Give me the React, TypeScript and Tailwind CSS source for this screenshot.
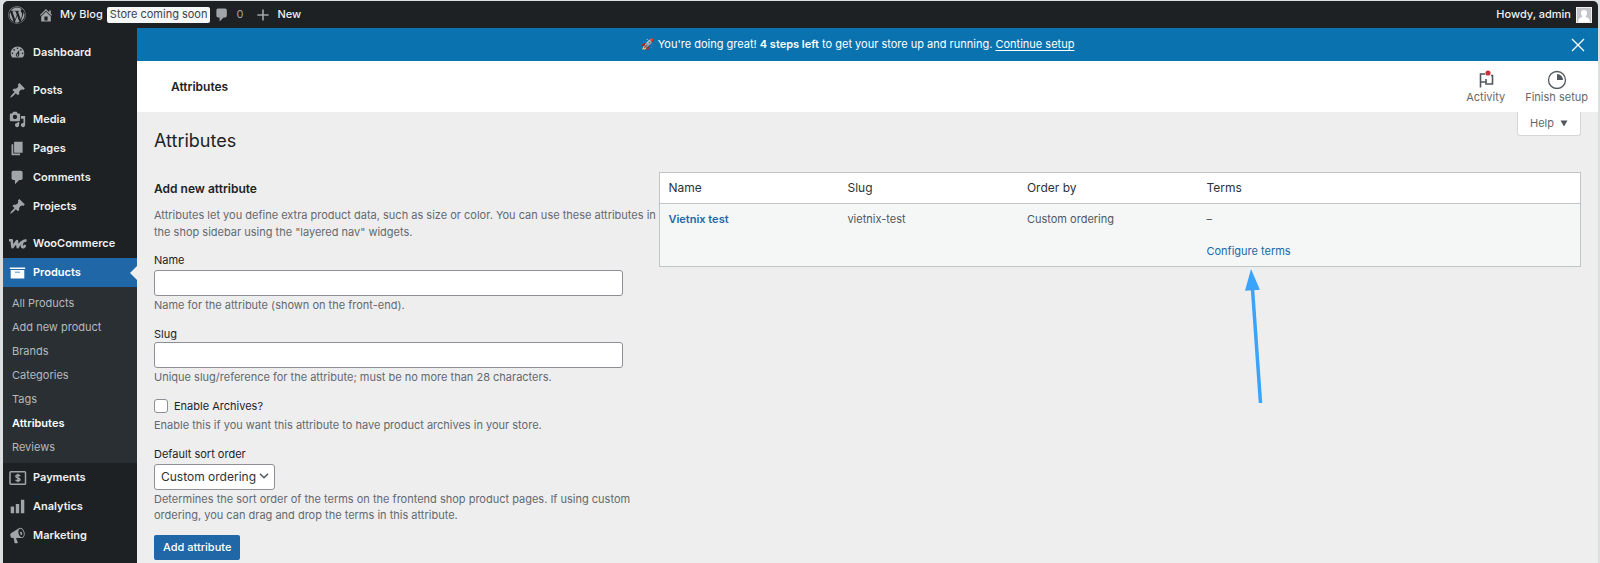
import React from 'react';
import { FaWordpress } from 'react-icons/fa';

const ICONS = {
  home: 'M16 8.5l1.53 1.53-1.06 1.06L10 4.6l-6.47 6.49-1.06-1.06L10 2.5l4 4v-2h2v4zm-6-2.46l6 5.99V18H4v-5.97zM12 17v-5H8v5h4z',
  dashboard:
    'M3.76 16h12.48c1.1-1.37 1.76-3.11 1.76-5 0-4.42-3.58-8-8-8s-8 3.58-8 8c0 1.89.66 3.63 1.76 5zM10 4c.55 0 1 .45 1 1s-.45 1-1 1-1-.45-1-1 .45-1 1-1zM6 6c.55 0 1 .45 1 1s-.45 1-1 1-1-.45-1-1 .45-1 1-1zm8 0c.55 0 1 .45 1 1s-.45 1-1 1-1-.45-1-1 .45-1 1-1zm-5.37 5.55L12 7v6c0 1.1-.9 2-2 2s-2-.9-2-2c0-.57.24-1.08.63-1.45zM4 10c.55 0 1 .45 1 1s-.45 1-1 1-1-.45-1-1 .45-1 1-1zm12 0c.55 0 1 .45 1 1s-.45 1-1 1-1-.45-1-1 .45-1 1-1zm-5 3c0-.55-.45-1-1-1s-1 .45-1 1 .45 1 1 1 1-.45 1-1z',
  pin: 'M10.44 3.02l1.82-1.82 6.36 6.35-1.83 1.82c-1.05-.68-2.48-.57-3.41.36l-.75.75c-.92.93-1.04 2.35-.35 3.41l-1.83 1.82-2.41-2.41-2.8 2.79c-.42.42-3.38 2.71-3.8 2.29s1.86-3.39 2.28-3.81l2.79-2.79L4.1 9.36l1.83-1.82c1.05.69 2.48.57 3.4-.36l.75-.75c.93-.92 1.05-2.35.36-3.41z',
  media:
    'M13 11V4c0-.55-.45-1-1-1h-1.67L9 1H5L3.67 3H2c-.55 0-1 .45-1 1v7c0 .55.45 1 1 1h10c.55 0 1-.45 1-1zM7 4.5c1.38 0 2.5 1.12 2.5 2.5S8.38 9.5 7 9.5 4.5 8.38 4.5 7 5.62 4.5 7 4.5zM14 6h5v10.5c0 1.38-1.12 2.5-2.5 2.5S14 17.88 14 16.5s1.12-2.5 2.5-2.5c.17 0 .34.02.5.05V9h-3V6zm-4 8.05V13h2v3.5c0 1.38-1.12 2.5-2.5 2.5S7 17.88 7 16.5 8.12 14 9.5 14c.17 0 .34.02.5.05z',
  page: 'M6 15V2h10v13H6zm-1 1h8v2H3V5h2v11z',
  comment: 'M5 2h9c1.1 0 2 .9 2 2v7c0 1.1-.9 2-2 2h-2l-5 5v-5H5c-1.1 0-2-.9-2-2V4c0-1.1.9-2 2-2z',
  archive: 'M19 4v2H1V4h18zM2 7h16v10H2V7zm11 3V9H7v1h6z',
  chart: 'M18 18V2h-4v16h4zm-6 0V7H8v11h4zm-6 0v-8H2v8h4z',
  megaphone:
    'M18.15 5.94c.46 1.62.38 3.22-.02 4.48-.42 1.28-1.26 2.18-2.3 2.48-.16.06-.26.06-.4.06-.06.02-.12.02-.18.02-.06.02-.14.02-.22.02h-6.8l2.22 5.5c.02.14-.06.26-.14.34-.08.1-.24.16-.34.16H6.95c-.1 0-.26-.06-.34-.16-.08-.08-.16-.2-.14-.34l-1-5.5H4.25l-.02-.02c-.5.06-1.08-.18-1.54-.62s-.88-1.08-1.06-1.88c-.24-.8-.2-1.56-.02-2.2.18-.62.58-1.08 1.06-1.3l.02-.02 9-5.4c.1-.06.18-.1.24-.16.06-.04.14-.08.24-.12.16-.08.28-.12.5-.18 1.04-.3 2.24.1 3.22.98s1.84 2.24 2.26 3.86zm-2.58 5.98h-.02c.4-.1.74-.34 1.04-.7.58-.7.86-1.76.86-3.04 0-.64-.1-1.3-.28-1.98-.34-1.36-1.02-2.5-1.78-3.24s-1.68-1.1-2.46-.88c-.82.22-1.4.96-1.7 2-.32 1.04-.28 2.36.06 3.72.38 1.36 1 2.5 1.8 3.24.78.74 1.62 1.1 2.48.88zM13 6.1c.5-.7 1.5-.6 2 .2.6.9.7 2.3.1 2.9-.5.5-1.2.3-1.6-.3z',
  plus: 'M17 9v2h-6v6H9v-6H3V9h6V3h2v6h6z',
};

type IconName = keyof typeof ICONS;

const Icon: React.FC<{ name: IconName; className?: string }> = ({ name, className = 'size-[17px]' }) => (
  <svg viewBox="0 0 20 20" fill="currentColor" fillRule="evenodd" className={className} aria-hidden="true">
    <path d={ICONS[name]} />
  </svg>
);

const PaymentsIcon = () => (
  <svg viewBox="0 0 18 16" fill="none" stroke="currentColor" className="h-4 w-[18px] shrink-0" aria-hidden="true">
    <rect x="1" y="1.8" width="15.5" height="12.4" rx="0.8" strokeWidth="1.5" />
    <path d="M11.1 6.2C10.8 5.4 10 5.1 8.9 5.1c-1.2 0-2 .5-2 1.4 0 2 4.1.9 4.1 3 0 .9-.9 1.4-2.1 1.4-1.1 0-1.9-.4-2.2-1.2M8.9 3.8v8.4" strokeWidth="1.5" />
  </svg>
);

const WooIcon = () => (
  <svg viewBox="0 0 18 12" fill="none" stroke="currentColor" strokeLinejoin="round" className="h-3 w-[18px] shrink-0" aria-hidden="true">
    <path d="M0 2.3h2.8c0 2.500.2 5 .7 7L8 3c0 2.300.2 4.300.7 6.300C10.500 5.800 12.500 3 17.500 2.300" strokeWidth="2.500" />
    <path d="M13.500 4c-1.300 3.200-.9 5.300.4 5.300 1 0 1.800-.8 2.300-2.300" strokeWidth="2.400" />
  </svg>
);

type MenuIcon = IconName | 'payments' | 'woo';

const MenuItem: React.FC<{ label: string; icon: MenuIcon; active?: boolean }> = ({ label, icon, active }) => (
  <li>
    <a
      href="#"
      className={
        active
          ? 'relative flex h-[29px] items-center gap-[7px] bg-[#2067a7] pl-[6px] text-white'
          : 'flex h-[29px] items-center gap-[7px] pl-[6px] text-[#f0f0f1] hover:text-[#72aee6]'
      }
    >
      <span className={active ? 'flex w-[17px]' : 'flex w-[17px] text-[#a0a5aa]'}>
        {icon === 'payments' ? <PaymentsIcon /> : icon === 'woo' ? <WooIcon /> : <Icon name={icon} />}
      </span>
      {label}
      {active && (
        <span className="absolute right-0 top-1/2 size-0 -translate-y-1/2 border-y-[7px] border-r-[7px] border-y-transparent border-r-[#eeeeee]" />
      )}
    </a>
  </li>
);

const SUBMENU = ['All Products', 'Add new product', 'Brands', 'Categories', 'Tags', 'Attributes', 'Reviews'];

const Sidebar = () => (
  <nav className="w-[134px] shrink-0 bg-[#1d2123] pt-[10px] text-[11px] font-semibold">
    <ul>
      <MenuItem label="Dashboard" icon="dashboard" />
    </ul>
    <ul className="mt-[9px]">
      <MenuItem label="Posts" icon="pin" />
      <MenuItem label="Media" icon="media" />
      <MenuItem label="Pages" icon="page" />
      <MenuItem label="Comments" icon="comment" />
      <MenuItem label="Projects" icon="pin" />
    </ul>
    <ul className="mt-2">
      <MenuItem label="WooCommerce" icon="woo" />
      <MenuItem label="Products" icon="archive" active />
    </ul>
    <ul className="bg-[#2a2f33] py-1 text-[11px] font-normal text-[#b4b9be]">
      {SUBMENU.map((label) => (
        <li key={label}>
          <a
            href="#"
            className={
              label === 'Attributes'
                ? 'flex h-6 items-center pl-[9px] font-semibold text-white'
                : 'flex h-6 items-center pl-[9px] hover:text-[#72aee6]'
            }
          >
            {label}
          </a>
        </li>
      ))}
    </ul>
    <ul>
      <MenuItem label="Payments" icon="payments" />
      <MenuItem label="Analytics" icon="chart" />
      <MenuItem label="Marketing" icon="megaphone" />
    </ul>
  </nav>
);

const AdminBar = () => (
  <header className="flex h-[27px] items-center rounded-t-[5px] bg-[#1d2123] pl-[5px] pr-[6px] text-[11px] font-medium text-[#f0f0f1]">
    <a href="#" aria-label="About WordPress" className="mr-3 text-[#a0a5aa]">
      <FaWordpress className="size-[18px]" />
    </a>
    <a href="#" className="flex items-center gap-[6px]">
      <Icon name="home" className="size-4 text-[#a0a5aa]" />
      My Blog
    </a>
    <a href="#" className="ml-1 flex h-4 items-center rounded-[2px] bg-[#f6f7f7] px-[3px] font-normal text-[#3c434a]">
      Store coming soon
    </a>
    <a href="#" className="ml-1 flex items-center gap-[6px] font-normal text-[#a0a5aa]">
      <Icon name="comment" className="size-4" />
      0
    </a>
    <a href="#" className="ml-3 flex items-center gap-[6px]">
      <Icon name="plus" className="size-4 text-[#a0a5aa]" />
      New
    </a>
    <a href="#" className="ml-auto flex items-center gap-[5px]">
      Howdy, admin
      <svg viewBox="0 0 16 16" className="size-4" aria-hidden="true">
        <rect width="16" height="16" fill="#f0f0f1" />
        <rect x="1" y="1" width="14" height="14" fill="#c3c4c7" />
        <path d="M8 3a3 3 0 0 1 3 3c0 1.5-.6 2.5-1.3 3v1c1.8.5 3.6 1.3 4 3v2H2.3v-2c.4-1.7 2.2-2.5 4-3V9C5.6 8.5 5 7.5 5 6a3 3 0 0 1 3-3z" fill="#fff" />
      </svg>
    </a>
  </header>
);

const SetupNotice = () => (
  <div className="flex h-[33px] items-center bg-[#0b72b0] pl-2 pr-3 text-[11px] text-white">
    <p className="flex-1 text-center">
      🚀 You're doing great! <strong className="font-semibold">4 steps left</strong> to get your store up and running.{' '}
      <a href="#" className="underline underline-offset-2">
        Continue setup
      </a>
    </p>
    <button type="button" aria-label="Dismiss">
      <svg viewBox="0 0 16 16" fill="none" stroke="currentColor" strokeWidth="1.3" className="size-4">
        <path d="M2 2l12 12M14 2L2 14" />
      </svg>
    </button>
  </div>
);

const PageHeader = () => (
  <div className="flex h-[51px] items-center bg-white pl-[34px] pr-[10px]">
    <h2 className="flex-1 text-[12px] font-semibold text-[#1d2327]">Attributes</h2>
    <div className="flex gap-5 text-[11px] leading-4 text-[#646970]">
      <button type="button" className="flex flex-col items-center">
        <svg viewBox="0 0 20 20" fill="none" className="size-5" aria-hidden="true">
          <path d="M4.5 18.5V5H9M4.5 13H10v2h6.5V6.5H15M10 13v-3" stroke="#50575e" strokeWidth="1.6" />
          <circle cx="12" cy="4" r="2.6" fill="#cc3038" />
        </svg>
        Activity
      </button>
      <button type="button" className="flex flex-col items-center">
        <svg viewBox="0 0 20 20" fill="none" className="size-5" aria-hidden="true">
          <circle cx="10" cy="11" r="8.5" stroke="#50575e" strokeWidth="1.3" />
          <path d="M10 5a6 6 0 0 1 6 6h-6z" fill="#50575e" />
        </svg>
        Finish setup
      </button>
    </div>
  </div>
);

const inputClass = 'h-[26px] w-full rounded-[3px] border border-[#8c8f94] bg-white text-[12px] text-[#2c3338]';
const hintClass = 'mt-px whitespace-nowrap text-[11px] leading-4 text-[#646970]';
const labelClass = 'text-[11px] leading-4 text-[#1d2327]';

const AttributeForm = () => (
  <form>
    <h2 className="text-[12px] font-semibold leading-4 text-[#1d2327]">Add new attribute</h2>
    <p className="mt-[10px] whitespace-nowrap text-[11px] leading-[17px] text-[#646970]">
      Attributes let you define extra product data, such as size or color. You can use these attributes in
      <br />
      the shop sidebar using the "layered nav" widgets.
    </p>
    <div className="mt-[11px] w-[94%]">
      <div className="flex flex-col">
        <label htmlFor="attribute-name" className={labelClass}>
          Name
        </label>
        <input id="attribute-name" type="text" className={`mt-[2px] px-2 ${inputClass}`} />
        <p className={hintClass}>Name for the attribute (shown on the front-end).</p>
      </div>
      <div className="mt-[13px] flex flex-col">
        <label htmlFor="attribute-slug" className={labelClass}>
          Slug
        </label>
        <input id="attribute-slug" type="text" className={`px-2 ${inputClass}`} />
        <p className={hintClass}>Unique slug/reference for the attribute; must be no more than 28 characters.</p>
      </div>
      <div className="mt-[13px]">
        <label className={`flex items-center gap-[6px] ${labelClass}`}>
          <input
            type="checkbox"
            className="size-[14px] appearance-none rounded-[3px] border border-[#8c8f94] bg-white checked:bg-[#2067a7]"
          />
          Enable Archives?
        </label>
        <p className={`pt-[2px] ${hintClass}`}>
          Enable this if you want this attribute to have product archives in your store.
        </p>
      </div>
      <div className="mt-[13px]">
        <label htmlFor="attribute-orderby" className={`block ${labelClass}`}>
          Default sort order
        </label>
        <div className="relative mt-px w-[121px]">
          <select id="attribute-orderby" className={`appearance-none pl-[6px] ${inputClass}`}>
            <option>Custom ordering</option>
            <option>Name</option>
            <option>Name (numeric)</option>
            <option>Term ID</option>
          </select>
          <svg
            viewBox="0 0 10 6"
            fill="none"
            stroke="#50575e"
            strokeWidth="1.5"
            className="pointer-events-none absolute right-[6px] top-[10px] h-[6px] w-[10px]"
            aria-hidden="true"
          >
            <path d="M1 .8l4 4 4-4" />
          </svg>
        </div>
        <p className={hintClass}>
          Determines the sort order of the terms on the frontend shop product pages. If using custom
          <br />
          ordering, you can drag and drop the terms in this attribute.
        </p>
      </div>
    </div>
    <button type="submit" className="mt-3 h-[25px] rounded-[2px] bg-[#2067a7] px-[9px] text-[11px] font-medium text-white">
      Add attribute
    </button>
  </form>
);

const AttributeTable = () => (
  <table className="w-full table-fixed border-collapse border border-[#c3c4c7] bg-white text-left text-[11px] text-[#50575e]">
    <thead>
      <tr className="h-[31px] border-b border-[#c3c4c7] text-[12px] text-[#2c3338]">
        <th className="w-[19.5%] px-2 font-normal">Name</th>
        <th className="w-[19.5%] px-2 font-normal">Slug</th>
        <th className="w-[19.5%] px-2 font-normal">Order by</th>
        <th className="px-2 font-normal">Terms</th>
      </tr>
    </thead>
    <tbody>
      <tr className="h-[63px] bg-[#f5f7f7] align-top leading-4">
        <td className="px-2 pt-[7px]">
          <a href="#" className="font-semibold text-[#2067a7]">
            Vietnix test
          </a>
        </td>
        <td className="px-2 pt-[7px]">vietnix-test</td>
        <td className="px-2 pt-[7px]">Custom ordering</td>
        <td className="px-2 pt-[7px]">
          <span className="block">–</span>
          <span className="relative mt-4 inline-block">
            <a href="#" className="text-[#2067a7]">
              Configure terms
            </a>
            {/* pointer towards the link */}
            <svg viewBox="0 0 20 134" className="absolute left-1/2 top-full -ml-1 mt-[10px] h-[134px] w-5" aria-hidden="true">
              <path d="M7.5 20l8 114" stroke="#3aa3fb" strokeWidth="3.5" />
              <path d="M6 0l8.900 20.700L0 21.800z" fill="#3aa3fb" />
            </svg>
          </span>
        </td>
      </tr>
    </tbody>
  </table>
);

export default function App() {
  return (
    <div className="flex min-h-screen flex-col bg-[#dcdfdf] pl-[3px] pr-[2px] pt-px font-[Inter,'Noto_Sans',sans-serif]">
      <AdminBar />
      <div className="flex flex-1">
        <Sidebar />
        <main className="min-w-0 flex-1 bg-[#eeeeee]">
          <SetupNotice />
          <PageHeader />
          <div className="flex items-start justify-between px-[17px]">
            <h1 className="pt-[17px] text-[18px] leading-6 text-[#1d2327]">Attributes</h1>
            <button
              type="button"
              className="flex h-6 items-center gap-[6px] rounded-b-[3px] border border-t-0 border-[#d5d6d8] bg-white px-3 text-[11px] text-[#646970]"
            >
              Help
              <svg viewBox="0 0 8 7" className="h-[7px] w-2" fill="#50575e" aria-hidden="true">
                <path d="M.5.5h7L4 6.5z" />
              </svg>
            </button>
          </div>
          <div className="flex items-start px-[17px] pb-1 pt-[19px]">
            <section className="w-[35%] pt-[9px]">
              <AttributeForm />
            </section>
            <section className="w-[65%] pl-[6px]">
              <AttributeTable />
            </section>
          </div>
        </main>
      </div>
    </div>
  );
}
